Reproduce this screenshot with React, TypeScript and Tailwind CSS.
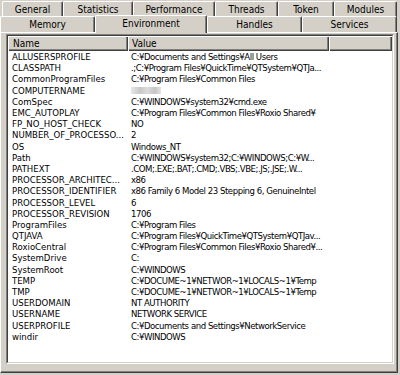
import type { FC } from "react";

const FONT = { fontFamily: '"DejaVu Sans Condensed", "Liberation Sans Narrow", "Liberation Sans", Arial, sans-serif' };

const rows: [string, string][] = [
  ["ALLUSERSPROFILE", "C:¥Documents and Settings¥All Users"],
  ["CLASSPATH", ".;C:¥Program Files¥QuickTime¥QTSystem¥QTJa..."],
  ["CommonProgramFiles", "C:¥Program Files¥Common Files"],
  ["COMPUTERNAME", ""],
  ["ComSpec", "C:¥WINDOWS¥system32¥cmd.exe"],
  ["EMC_AUTOPLAY", "C:¥Program Files¥Common Files¥Roxio Shared¥"],
  ["FP_NO_HOST_CHECK", "NO"],
  ["NUMBER_OF_PROCESSO...", "2"],
  ["OS", "Windows_NT"],
  ["Path", "C:¥WINDOWS¥system32;C:¥WINDOWS;C:¥W..."],
  ["PATHEXT", ".COM;.EXE;.BAT;.CMD;.VBS;.VBE;.JS;.JSE;.W..."],
  ["PROCESSOR_ARCHITEC...", "x86"],
  ["PROCESSOR_IDENTIFIER", "x86 Family 6 Model 23 Stepping 6, GenuineIntel"],
  ["PROCESSOR_LEVEL", "6"],
  ["PROCESSOR_REVISION", "1706"],
  ["ProgramFiles", "C:¥Program Files"],
  ["QTJAVA", "C:¥Program Files¥QuickTime¥QTSystem¥QTJav..."],
  ["RoxioCentral", "C:¥Program Files¥Common Files¥Roxio Shared¥..."],
  ["SystemDrive", "C:"],
  ["SystemRoot", "C:¥WINDOWS"],
  ["TEMP", "C:¥DOCUME~1¥NETWOR~1¥LOCALS~1¥Temp"],
  ["TMP", "C:¥DOCUME~1¥NETWOR~1¥LOCALS~1¥Temp"],
  ["USERDOMAIN", "NT AUTHORITY"],
  ["USERNAME", "NETWORK SERVICE"],
  ["USERPROFILE", "C:¥Documents and Settings¥NetworkService"],
  ["windir", "C:¥WINDOWS"],
];

const topTabs: [string, string][] = [
  ["General", "w-[61px]"],
  ["Statistics", "w-[70px]"],
  ["Performance", "w-[82px]"],
  ["Threads", "w-[63px]"],
  ["Token", "w-[56px]"],
  ["Modules", "w-[63px]"],
];

const Tab: FC<{ label: string; w: string }> = ({ label, w }) => (
  <div
    className={`${w} h-[16px] flex items-center justify-center rounded-t-[2px] border-t border-l border-t-white border-l-white shadow-[inset_-1px_0_#808080] border-r border-r-[#404040] text-[10px] text-black leading-none`}
  >
    {label}
  </div>
);

const App: FC = () => {
  return (
    <div className="w-[400px] h-[375px] bg-[#d4d0c8] overflow-hidden flex flex-col" style={FONT}>
      {/* back row of tabs */}
      <div className="flex pl-[2px] pt-[1px] h-[16px]">
        {topTabs.map(([l, w]) => (
          <Tab key={l} label={l} w={w} />
        ))}
      </div>

      {/* front row of tabs */}
      <div className="flex h-[16px] items-end">
        <Tab label="Memory" w="w-[95px]" />
        <div className="relative z-10 w-[112px] h-[18px] mb-[-1px] bg-[#d4d0c8] flex items-center justify-center rounded-t-[2px] border-t border-l border-t-white border-l-white border-r border-r-[#404040] shadow-[inset_-1px_0_#808080] text-[10px] text-black leading-none pb-[2px]">
          Environment
        </div>
        <Tab label="Handles" w="w-[95px]" />
        <Tab label="Services" w="w-[95px]" />
      </div>

      {/* panel */}
      <div className="w-[398px] h-[341px] border-t border-l border-t-white border-l-white border-r border-b border-r-[#404040] border-b-[#404040] shadow-[inset_-1px_-1px_#808080] pt-[1px] pl-[5px] pr-[3px] pb-[8px] flex">
        <div className="flex-1 border-t border-l border-t-[#808080] border-l-[#808080] border-r border-b border-r-white border-b-white flex">
          <div className="flex-1 bg-white border-t border-l border-t-[#404040] border-l-[#404040] border-r border-b border-r-[#d4d0c8] border-b-[#d4d0c8] flex flex-col overflow-hidden">
            {/* header */}
            <div className="flex h-[15px] shrink-0 text-[10px] text-black leading-none">
              <div className="w-[120px] bg-[#d4d0c8] flex items-center pl-[5px] shadow-[inset_1px_1px_#ffffff,inset_-1px_-1px_#404040,inset_-2px_-2px_#808080]">
                Name
              </div>
              <div className="w-[201px] bg-[#d4d0c8] flex items-center pl-[4px] shadow-[inset_1px_1px_#ffffff,inset_-1px_-1px_#404040,inset_-2px_-2px_#808080]">
                Value
              </div>
              <div className="flex-1 bg-[#d4d0c8] shadow-[inset_1px_1px_#ffffff,inset_-1px_-1px_#404040,inset_-2px_-2px_#808080]" />
            </div>

            {/* rows */}
            <div className="flex flex-col">
              {rows.map(([name, value]) => (
                <div key={name} className="flex h-[11.2px] items-center text-[9.5px] text-black leading-[11px] whitespace-nowrap">
                  <div className="w-[120px] pl-[4px] overflow-hidden">{name}</div>
                  <div className="w-[201px] pl-[3px] overflow-hidden tracking-[-0.45px]">
                    {name === "COMPUTERNAME" ? (
                      <div className="w-[30px] h-[7px] bg-[linear-gradient(90deg,#e8e8e8,#c8c8c8_30%,#dcdcdc_55%,#c4c4c4_80%,#e4e4e4)] blur-[0.5px]" />
                    ) : (
                      value
                    )}
                  </div>
                </div>
              ))}
            </div>
          </div>
        </div>
      </div>
    </div>
  );
};

export default App;
